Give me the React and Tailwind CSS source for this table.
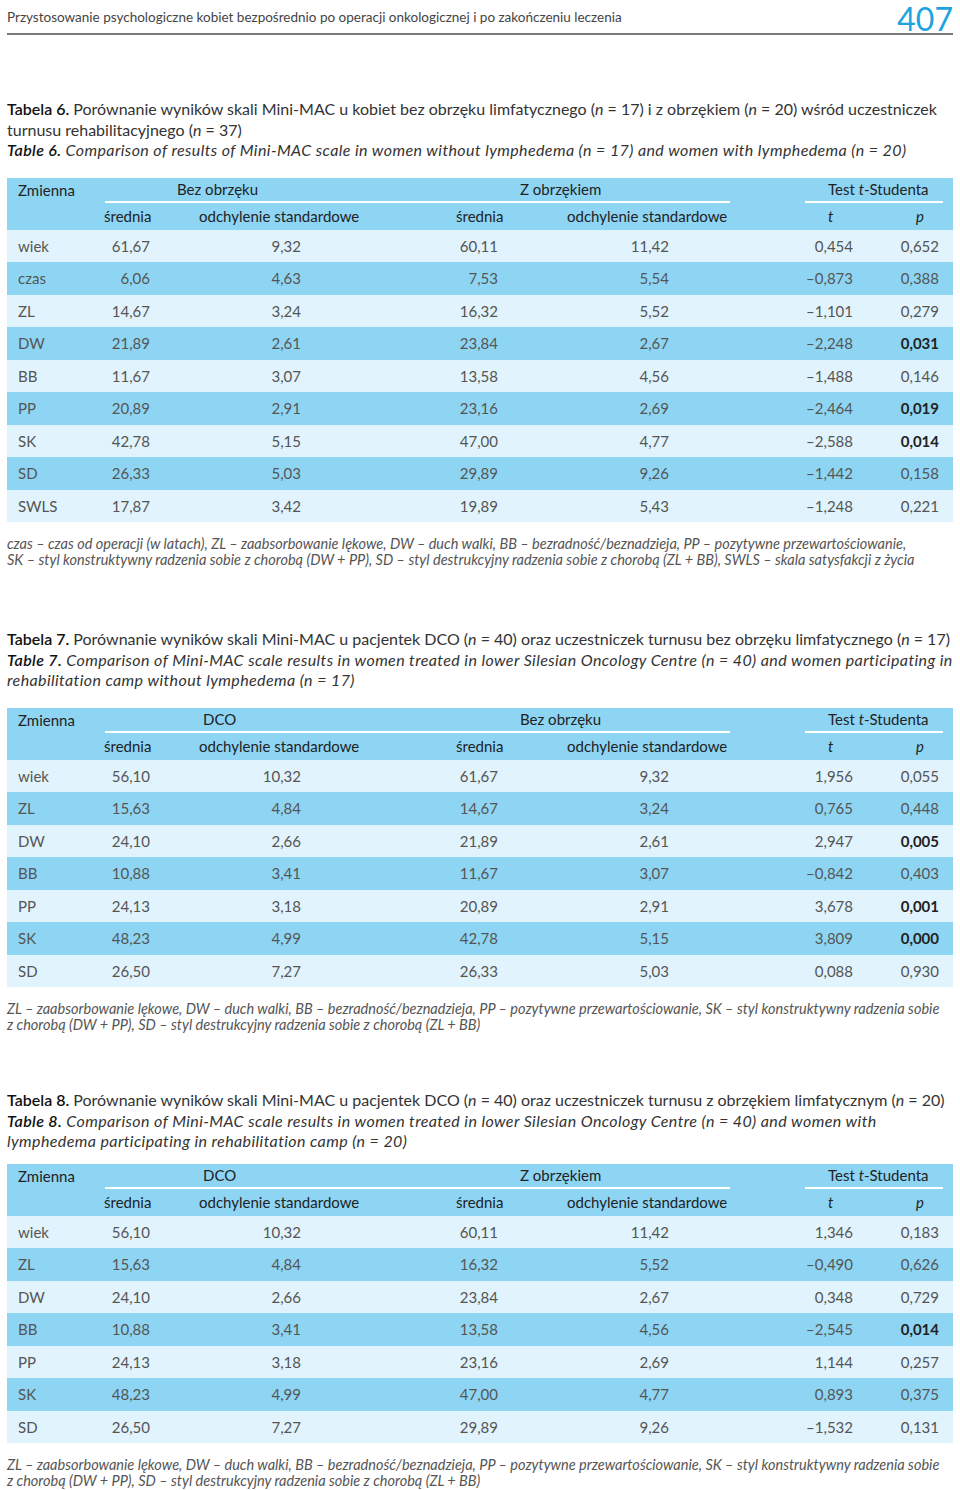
import React from 'react';

const t6 = [
  ['wiek', '61,67', '9,32', '60,11', '11,42', '0,454', '0,652'],
  ['czas', '6,06', '4,63', '7,53', '5,54', '–0,873', '0,388'],
  ['ZL', '14,67', '3,24', '16,32', '5,52', '–1,101', '0,279'],
  ['DW', '21,89', '2,61', '23,84', '2,67', '–2,248', '0,031', true],
  ['BB', '11,67', '3,07', '13,58', '4,56', '–1,488', '0,146'],
  ['PP', '20,89', '2,91', '23,16', '2,69', '–2,464', '0,019', true],
  ['SK', '42,78', '5,15', '47,00', '4,77', '–2,588', '0,014', true],
  ['SD', '26,33', '5,03', '29,89', '9,26', '–1,442', '0,158'],
  ['SWLS', '17,87', '3,42', '19,89', '5,43', '–1,248', '0,221'],
];

const t7 = [
  ['wiek', '56,10', '10,32', '61,67', '9,32', '1,956', '0,055'],
  ['ZL', '15,63', '4,84', '14,67', '3,24', '0,765', '0,448'],
  ['DW', '24,10', '2,66', '21,89', '2,61', '2,947', '0,005', true],
  ['BB', '10,88', '3,41', '11,67', '3,07', '–0,842', '0,403'],
  ['PP', '24,13', '3,18', '20,89', '2,91', '3,678', '0,001', true],
  ['SK', '48,23', '4,99', '42,78', '5,15', '3,809', '0,000', true],
  ['SD', '26,50', '7,27', '26,33', '5,03', '0,088', '0,930'],
];

const t8 = [
  ['wiek', '56,10', '10,32', '60,11', '11,42', '1,346', '0,183'],
  ['ZL', '15,63', '4,84', '16,32', '5,52', '–0,490', '0,626'],
  ['DW', '24,10', '2,66', '23,84', '2,67', '0,348', '0,729'],
  ['BB', '10,88', '3,41', '13,58', '4,56', '–2,545', '0,014', true],
  ['PP', '24,13', '3,18', '23,16', '2,69', '1,144', '0,257'],
  ['SK', '48,23', '4,99', '47,00', '4,77', '0,893', '0,375'],
  ['SD', '26,50', '7,27', '29,89', '9,26', '–1,532', '0,131'],
];

const N = () => <i>n</i>;

const Row = ({ r, i }) => (
  <div className={`flex h-[32.5px] items-center text-[15px] text-[#555] ${i % 2 ? 'bg-[#8ed5f4]' : 'bg-[#e1f3fc]'}`}>
    <div className="w-[93px] pl-[11px]">{r[0]}</div>
    <div className="w-[50px] text-right">{r[1]}</div>
    <div className="w-[151px] text-right">{r[2]}</div>
    <div className="w-[197px] text-right">{r[3]}</div>
    <div className="w-[171px] text-right">{r[4]}</div>
    <div className="w-[184px] text-right">{r[5]}</div>
    <div className={`w-[86px] text-right ${r[7] ? 'font-bold text-[#222]' : ''}`}>{r[6]}</div>
  </div>
);

const DataTable = ({ first, second, firstPad, rows }) => (
  <div className="mx-[7px]">
    <div className="bg-[#8ed5f4] text-[15px] text-[#222]">
      <div className="flex h-[25px] items-center">
        <div className="w-[98px] pl-[11px]">Zmienna</div>
        <div className="flex h-full w-[625px] items-center border-b-2 border-white">
          <div className={`w-[350px] ${firstPad}`}>{first}</div>
          <div className="pl-[65px]">{second}</div>
        </div>
        <div className="ml-[75px] flex h-full w-[138px] items-center border-b-2 border-white pl-[23px]">
          Test&nbsp;<i>t</i>-Studenta
        </div>
      </div>
      <div className="flex h-[27px] items-center">
        <div className="w-[97px]" />
        <div className="w-[95px]">średnia</div>
        <div className="w-[257px]">odchylenie standardowe</div>
        <div className="w-[111px]">średnia</div>
        <div className="w-[261px]">odchylenie standardowe</div>
        <div className="w-[88px] italic">t</div>
        <div className="italic">p</div>
      </div>
    </div>
    {rows.map((r, i) => (
      <Row key={r[0]} r={r} i={i} />
    ))}
  </div>
);

const Note = ({ children }) => (
  <div className="mx-[7px] text-[14.5px] italic leading-[16px] text-[#555] whitespace-nowrap">{children}</div>
);

const Caption = ({ children }) => (
  <div className="mx-[7px] text-[16px] leading-[20.5px] whitespace-nowrap">{children}</div>
);

const En = ({ children }) => <div className="italic tracking-[0.4px]">{children}</div>;

export default function App() {
  return (
    <div className="w-[960px] bg-white font-['Lato',sans-serif] text-[#333]">
      <div className="mx-[7px] flex h-[35px] items-start justify-between border-b-2 border-[#7a7a7a]">
        <div className="mt-[9px] text-[13.5px] leading-[16px] text-[#444]">
          Przystosowanie psychologiczne kobiet bezpośrednio po operacji onkologicznej i po zakończeniu leczenia
        </div>
        <div className="text-[32px] leading-[38px] text-[#1ba4df]">407</div>
      </div>

      <Caption>
        <div className="mt-[64px]">
          <b className="font-semibold text-[#111]">Tabela 6.</b> Porównanie wyników skali Mini-MAC u kobiet bez obrzęku limfatycznego (<N /> = 17) i z obrzękiem (<N /> = 20) wśród uczestniczek
        </div>
        <div>turnusu rehabilitacyjnego (<N /> = 37)</div>
        <En>
          <b className="font-semibold text-[#111]">Table 6.</b> Comparison of results of Mini-MAC scale in women without lymphedema (n = 17) and women with lymphedema (n = 20)
        </En>
      </Caption>

      <div className="mt-[17px]">
        <DataTable first="Bez obrzęku" second="Z obrzękiem" firstPad="pl-[72px]" rows={t6} />
      </div>
      <div className="mt-[14px]">
        <Note>
          czas – czas od operacji (w latach), ZL – zaabsorbowanie lękowe, DW – duch walki, BB – bezradność/beznadzieja, PP – pozytywne przewartościowanie,
          <br />
          SK – styl konstruktywny radzenia sobie z chorobą (DW + PP), SD – styl destrukcyjny radzenia sobie z chorobą (ZL + BB), SWLS – skala satysfakcji z życia
        </Note>
      </div>

      <Caption>
        <div className="mt-[61px]">
          <b className="font-semibold text-[#111]">Tabela 7.</b> Porównanie wyników skali Mini-MAC u pacjentek DCO (<N /> = 40) oraz uczestniczek turnusu bez obrzęku limfatycznego (<N /> = 17)
        </div>
        <En>
          <b className="font-semibold text-[#111]">Table 7.</b> Comparison of Mini-MAC scale results in women treated in lower Silesian Oncology Centre (n = 40) and women participating in
        </En>
        <En>rehabilitation camp without lymphedema (n = 17)</En>
      </Caption>

      <div className="mt-[17px]">
        <DataTable first="DCO" second="Bez obrzęku" firstPad="pl-[98px]" rows={t7} />
      </div>
      <div className="mt-[14px]">
        <Note>
          ZL – zaabsorbowanie lękowe, DW – duch walki, BB – bezradność/beznadzieja, PP – pozytywne przewartościowanie, SK – styl konstruktywny radzenia sobie
          <br />
          z chorobą (DW + PP), SD – styl destrukcyjny radzenia sobie z chorobą (ZL + BB)
        </Note>
      </div>

      <Caption>
        <div className="mt-[57px]">
          <b className="font-semibold text-[#111]">Tabela 8.</b> Porównanie wyników skali Mini-MAC u pacjentek DCO (<N /> = 40) oraz uczestniczek turnusu z obrzękiem limfatycznym (<N /> = 20)
        </div>
        <En>
          <b className="font-semibold text-[#111]">Table 8.</b> Comparison of Mini-MAC scale results in women treated in lower Silesian Oncology Centre (n = 40) and women with
        </En>
        <En>lymphedema participating in rehabilitation camp (n = 20)</En>
      </Caption>

      <div className="mt-[12px]">
        <DataTable first="DCO" second="Z obrzękiem" firstPad="pl-[98px]" rows={t8} />
      </div>
      <div className="mt-[14px] pb-[8px]">
        <Note>
          ZL – zaabsorbowanie lękowe, DW – duch walki, BB – bezradność/beznadzieja, PP – pozytywne przewartościowanie, SK – styl konstruktywny radzenia sobie
          <br />
          z chorobą (DW + PP), SD – styl destrukcyjny radzenia sobie z chorobą (ZL + BB)
        </Note>
      </div>
    </div>
  );
}
